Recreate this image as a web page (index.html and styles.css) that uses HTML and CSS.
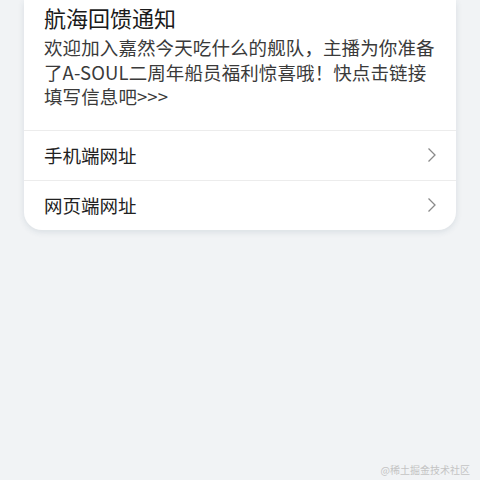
FILE: index.html
```html
<!DOCTYPE html>
<html lang="zh-CN">
<head>
<meta charset="utf-8">
<link rel="stylesheet" href="styles.css">
</head>
<body>
<div class="page">
  <div class="card">
    <div class="notice">
      <div class="title">航海回馈通知</div>
      <div class="desc">欢迎加入嘉然今天吃什么的舰队，主播为你准备了A-SOUL二周年船员福利惊喜哦！快点击链接填写信息吧&gt;&gt;&gt;</div>
    </div>
    <div class="row">
      <span class="label">手机端网址</span>
      <svg class="chev" width="10" height="16" viewBox="0 0 10 16"><polyline points="1.5,1.5 8,8 1.5,14.5" fill="none" stroke="#8a8a8a" stroke-width="1.3"/></svg>
    </div>
    <div class="row">
      <span class="label">网页端网址</span>
      <svg class="chev" width="10" height="16" viewBox="0 0 10 16"><polyline points="1.5,1.5 8,8 1.5,14.5" fill="none" stroke="#8a8a8a" stroke-width="1.3"/></svg>
    </div>
  </div>
  <div class="watermark">@稀土掘金技术社区</div>
</div>
</body>
</html>
```
FILE: styles.css
```css
html, body {
  margin: 0;
  padding: 0;
  background: #f1f3f5;
  height: 100%;
}
.page {
  position: relative;
  width: 480px;
  height: 480px;
  overflow: hidden;
  font-family: "Noto Sans CJK SC", "Noto Sans", sans-serif;
}
.card {
  margin: 0 24px;
  background: #ffffff;
  border-radius: 0 0 18px 18px;
  box-shadow: 0 2px 6px rgba(40, 70, 100, 0.12);
}
.notice {
  padding: 3px 20px 21px 20px;
}
.title {
  font-size: 22px;
  line-height: 28px;
  color: #1a1a1a;
}
.desc {
  margin-top: 4px;
  font-size: 18.5px;
  line-height: 24.5px;
  color: #3a3a3a;
  letter-spacing: 0.1px;
}
.row {
  height: 49px;
  border-top: 1px solid #ececec;
  display: flex;
  align-items: center;
  justify-content: space-between;
  padding: 0 19px 0 20px;
}
.label {
  font-size: 18.5px;
  color: #222222;
}
.chev {
  display: block;
}
.watermark {
  position: absolute;
  right: 10px;
  bottom: 3px;
  font-size: 10px;
  color: #c4c4c4;
  font-family: "Noto Sans CJK SC", serif;
}
```
